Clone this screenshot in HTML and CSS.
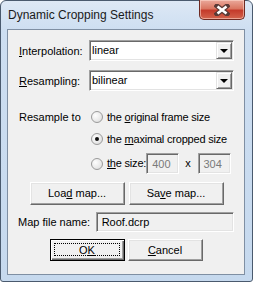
FILE: index.html
```html
<!DOCTYPE html>
<html lang="en">
<head>
  <meta charset="UTF-8">
  <title>Dynamic Cropping Settings</title>
  <link rel="stylesheet" href="styles.css">
</head>
<body>
  <div class="window">
    <div class="titlebar">
      <span class="title">Dynamic Cropping Settings</span>
      <button class="close" type="button" aria-label="Close">
        <svg width="16" height="12" viewBox="0 0 16 12">
          <path d="M3 2 L13 10 M13 2 L3 10" stroke="#5a3a36" stroke-width="5" stroke-linecap="square" fill="none"/>
          <path d="M3.5 2.5 L12.5 9.5 M12.5 2.5 L3.5 9.5" stroke="#fff" stroke-width="2.6" fill="none"/>
        </svg>
      </button>
    </div>

    <div class="client">
      <div class="field-row first">
        <label class="field-label"><u>I</u>nterpolation:</label>
        <div class="combo">
          <span class="combo-text">linear</span>
          <span class="combo-btn"><span class="arrow"></span></span>
        </div>
      </div>
      <div class="field-row">
        <label class="field-label"><u>R</u>esampling:</label>
        <div class="combo">
          <span class="combo-text">bilinear</span>
          <span class="combo-btn"><span class="arrow"></span></span>
        </div>
      </div>

      <div class="resample">
        <span class="resample-label">Resample to</span>
        <div class="options">
          <div class="option">
            <span class="radio"></span>
            <span>the <u>o</u>riginal frame size</span>
          </div>
          <div class="option">
            <span class="radio checked"></span>
            <span>the <u>m</u>aximal cropped size</span>
          </div>
          <div class="option last">
            <span class="radio"></span>
            <span><u>th</u>e size:</span>
            <span class="box size-box">400</span>
            <span class="times">x</span>
            <span class="box size-box">304</span>
          </div>
        </div>
      </div>

      <div class="button-row">
        <button class="btn wide" type="button">Loa<u>d</u> map...</button>
        <button class="btn wide" type="button">Sa<u>v</u>e map...</button>
      </div>

      <div class="file-row">
        <span class="file-label">Map file name:</span>
        <span class="box file-box">Roof.dcrp</span>
      </div>

      <div class="button-row bottom">
        <button class="btn default" type="button">O<u>K</u></button>
        <button class="btn" type="button"><u>C</u>ancel</button>
      </div>
    </div>
  </div>
</body>
</html>
```

FILE: styles.css
```css
html, body {
  margin: 0;
  padding: 0;
  background: #fff;
}
body {
  font-family: "Liberation Sans", Arial, sans-serif;
  font-size: 11px;
  line-height: 13px;
  color: #000;
}
u {
  text-decoration: underline;
  text-underline-offset: 1px;
}
.window {
  box-sizing: border-box;
  width: 253px;
  height: 282px;
  border: 1px solid #4a5a6e;
  border-radius: 6px 6px 3px 3px;
  padding: 0 7px 6px 6px;
  background: linear-gradient(to bottom, #dde8f5 0, #cddef1 30px, #c6d9ee 100%);
}
.titlebar {
  height: 28px;
  display: flex;
  justify-content: space-between;
  align-items: flex-start;
}
.title {
  margin: 7px 0 0 1px;
  font-size: 12px;
  line-height: 14px;
  color: #1a1a1a;
}
.close {
  margin-top: -1px;
  width: 46px;
  height: 20px;
  padding: 0;
  border: 1px solid #6e2a22;
  border-top: none;
  border-radius: 0 0 5px 5px;
  background: linear-gradient(to bottom, #eaa99b 0, #da7762 45%, #c43b2b 55%, #d3644d 100%);
  box-shadow: inset 0 0 0 1px rgba(255, 220, 210, 0.55);
  display: flex;
  align-items: center;
  justify-content: center;
}
.close svg {
  display: block;
}
.client {
  box-sizing: border-box;
  height: 246px;
  border: 1px solid #7f8fa3;
  background: #f0f0f0;
  padding: 10px 10px 0 11px;
}
.field-row {
  display: flex;
  align-items: center;
  height: 21px;
  margin-top: 9px;
}
.field-row.first {
  margin-top: 0;
}
.field-label {
  width: 70px;
  padding-top: 1px;
}
.combo {
  box-sizing: border-box;
  width: 145px;
  height: 21px;
  display: flex;
  background: #fff;
  border: 1px solid;
  border-color: #a0a0a0 #fff #fff #a0a0a0;
  box-shadow: inset 1px 1px 0 #696969, inset -1px -1px 0 #e3e3e3;
  padding: 1px;
}
.combo-text {
  flex: 1;
  padding: 2px 0 0 1px;
}
.combo-btn {
  box-sizing: border-box;
  width: 16px;
  height: 17px;
  background: #f0f0f0;
  border: 1px solid;
  border-color: #e3e3e3 #696969 #696969 #e3e3e3;
  box-shadow: inset 1px 1px 0 #fff, inset -1px -1px 0 #a0a0a0;
  display: flex;
  align-items: center;
  justify-content: center;
}
.arrow {
  width: 0;
  height: 0;
  margin-top: 1px;
  border-left: 4px solid transparent;
  border-right: 4px solid transparent;
  border-top: 4px solid #000;
}
.resample {
  display: flex;
  margin-top: 15px;
}
.resample-label {
  width: 72px;
  padding-top: 5px;
}
.options {
  display: flex;
  flex-direction: column;
  letter-spacing: -0.2px;
}
.option {
  display: flex;
  align-items: center;
  height: 22px;
}
.option.last {
  margin-top: 3px;
  height: 21px;
}
.radio {
  box-sizing: border-box;
  width: 12px;
  height: 12px;
  margin-right: 4px;
  border-radius: 50%;
  border: 1px solid #9a9a9a;
  background: radial-gradient(circle at 35% 35%, #fdfdfd 0, #e8e8e8 60%, #d4d4d4 100%);
  display: flex;
  align-items: center;
  justify-content: center;
}
.radio.checked::before {
  content: "";
  width: 4px;
  height: 4px;
  border-radius: 50%;
  background: #111;
}
.box {
  box-sizing: border-box;
  display: block;
  border: 1px solid;
  border-color: #a0a0a0 #fff #fff #a0a0a0;
  box-shadow: inset 1px 1px 0 #696969, inset -1px -1px 0 #e3e3e3;
  background: #f0f0f0;
}
.size-box {
  width: 33px;
  height: 21px;
  padding: 4px 0 0 5px;
  color: #7a7a7a;
  letter-spacing: 0;
}
.option .size-box:first-of-type {
  margin-left: 6px;
}
.times {
  margin: 0 7px 0 6px;
}
.button-row {
  display: flex;
  justify-content: center;
  gap: 4px;
  margin-top: 8px;
}
.button-row.bottom {
  gap: 3px;
  margin-top: 7px;
  padding-right: 1px;
}
.btn {
  position: relative;
  box-sizing: border-box;
  width: 75px;
  height: 22px;
  padding: 0;
  font: inherit;
  color: #000;
  background: #f0f0f0;
  border: 1px solid;
  border-color: #fff #696969 #696969 #fff;
  box-shadow: inset -1px -1px 0 #a0a0a0, inset 1px 1px 0 #e3e3e3;
}
.btn.wide {
  width: 95px;
  height: 23px;
}
.btn.default {
  border: 1px solid #000;
  box-shadow: inset 1px 1px 0 #fff, inset -1px -1px 0 #696969, inset -2px -2px 0 #a0a0a0;
}
.btn.default::after {
  content: "";
  position: absolute;
  top: 3px;
  left: 3px;
  right: 4px;
  bottom: 4px;
  border: 1px dotted #000;
}
.file-row {
  display: flex;
  align-items: center;
  margin-top: 7px;
}
.file-label {
  width: 78px;
  margin-left: -1px;
  padding-top: 1px;
}
.file-box {
  width: 139px;
  height: 20px;
  padding: 3px 0 0 5px;
}
```
